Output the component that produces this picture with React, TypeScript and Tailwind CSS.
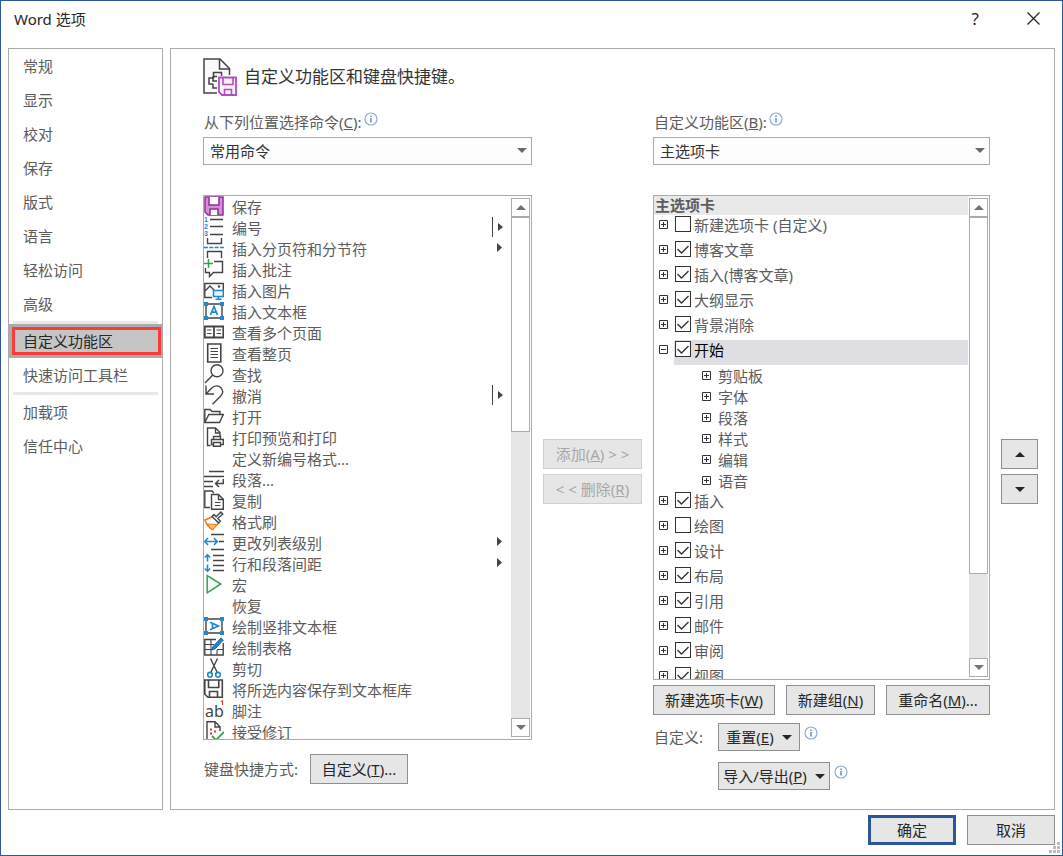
import { useState } from 'react'
import type { ReactNode } from 'react'

const INK = '#444444'
const BLUE = '#1e88cf'
const GREEN = '#3a9e4f'

const icons: Record<string, ReactNode> = {
  save: (
    <>
      <path d="M1 1H19V19H4L1 16Z" fill="#d58fd8" stroke="#8f2f97" strokeWidth="1.5" />
      <path d="M5 1V9H15V1" fill="#fff" stroke="#8f2f97" strokeWidth="1.5" />
      <path d="M6 19V13H14V19" fill="#fff" stroke="#8f2f97" strokeWidth="1.5" />
    </>
  ),
  numbering: (
    <>
      <g fill={BLUE} stroke="none" fontSize="7" fontWeight="700" fontFamily="Liberation Sans, sans-serif">
        <text x="0" y="5">1</text>
        <text x="0" y="12">2</text>
        <text x="0" y="19">3</text>
      </g>
      <path d="M6 2.5H19M6 9.5H19M6 17.5H19" />
    </>
  ),
  pageBreak: (
    <>
      <path d="M3.5 0V5.5H17.5V0M3.5 20V13.5H17.5V20" />
      <path d="M0 9.5H20" stroke={BLUE} strokeDasharray="4 1.3" />
    </>
  ),
  comment: (
    <>
      <path d="M10 2.5H18.5V13.5H9.5L5.5 17.5V13.5H1.5V9" />
      <path d="M4.5 0V9M0 4.5H9" stroke={GREEN} strokeWidth="1.5" />
    </>
  ),
  picture: (
    <>
      <path d="M8 17.5H.8V3.5H19.3V10M1 11L6 6L10 10" />
      <circle cx="15" cy="6.5" r="1.2" fill={INK} stroke="none" />
      <path d="M9.5 10.5H19.3V16.5H9.5ZM14.5 16.5V19M11.5 19.2H17.5" fill="#eaf4fb" stroke={BLUE} strokeWidth="1.5" />
    </>
  ),
  textBox: (
    <>
      <path d="M2 3H18V17H2Z" />
      <path d="M0 1H4V5H0ZM16 1H20V5H16ZM0 15H4V19H0ZM16 15H20V19H16Z" fill={BLUE} stroke="none" />
      <path d="M6.5 14L10 5.5L13.5 14M7.8 11.2H12.2" stroke={BLUE} strokeWidth="1.7" />
    </>
  ),
  multiPage: (
    <>
      <path d="M.8 4.5H19.3V15.5H.8ZM10 4.5V15.5" strokeWidth="1.8" />
      <path d="M3 8H7.5M3 11.5H7.5M12.5 8H17M12.5 11.5H17" strokeWidth="1.1" />
    </>
  ),
  onePage: (
    <>
      <path d="M3.7 1H16.8V19H3.7Z" strokeWidth="1.6" />
      <path d="M6.5 5.5H14M6.5 8.5H14M6.5 11.5H14M6.5 14.5H14" strokeWidth="1.1" />
    </>
  ),
  find: (
    <>
      <circle cx="13" cy="6.8" r="6" />
      <path d="M8.8 11L1 19" />
    </>
  ),
  undo: <path d="M2 .5V9H10M2 9L7.5 3.2C10.5 .2 14.5 .2 16.9 2.8C19.3 5.4 19 8.8 16.5 11.3L8.5 19.3" />,
  open: <path d="M.8 16.5V3.5H6L8 5.5H16V8.5M.8 16.5L4.8 8.5H19.3L15.5 16.5Z" />,
  print: (
    <>
      <path d="M6.5 18.5H3.5V1H11.5L16 5.5V9M11.5 1V6H16" />
      <path d="M9.5 12.5V9.5H16.5V12.5M9.5 17.5H7.5V12.5H19.3V17.5H16.5M9.5 15.5H16.5V19.3H9.5Z" />
    </>
  ),
  paragraph: (
    <>
      <path d="M5 2.5H20M0 7.5H20M0 12.5H9M0 17.5H9" />
      <path d="M19.3 10V14.5H11.5M15 11L11.5 14.5L15 18" />
    </>
  ),
  copy: (
    <>
      <path d="M6 17.5H.8V1H8L10 3" />
      <path d="M7.5 4.5H14.5L19.3 9.3V19.2H7.5ZM14.5 4.5V9.5H19.3" />
      <path d="M11 12.5H16.5M11 15.5H16.5" strokeWidth="1.1" />
    </>
  ),
  brush: (
    <>
      <path d="M9 5.5L1 9C2.5 13.5 5 16.8 8.5 18.5L14.5 12Z" fill="#fff" stroke="#e07b1f" strokeWidth="1.5" />
      <path d="M3.5 13L13 13.5L8.5 18.5C6.5 17.3 4.8 15.3 3.5 13Z" fill="#f6c36a" stroke="#e07b1f" strokeWidth="1" />
      <path d="M8 5.5L14.8 12L16.3 10L13.8 7.5L18.8 3L16.8 1L12.2 5.8L10 3.5Z" fill="#fff" />
    </>
  ),
  listLevel: (
    <>
      <path d="M7 2.5H20M15 9.5H20M7 17.5H20" />
      <path d="M1 9.5H13M4 6L.8 9.5L4 13M10 6L13.2 9.5L10 13" stroke={BLUE} strokeWidth="1.6" />
    </>
  ),
  spacing: (
    <>
      <path d="M9 2.5H20M9 7.5H20M9 12.5H20M9 17.5H20" />
      <path d="M3.5 2V8.5M.8 4.5L3.5 1.8L6.2 4.5M3.5 11.5V18M.8 15.5L3.5 18.2L6.2 15.5" stroke={BLUE} strokeWidth="1.6" />
    </>
  ),
  macro: <path d="M3.2 1.5V18.8L16.8 10Z" fill="#f3faf4" stroke={GREEN} strokeWidth="1.5" />,
  verticalText: (
    <>
      <path d="M2 3H18V17H2Z" />
      <path d="M0 1H4V5H0ZM16 1H20V5H16ZM0 15H4V19H0ZM16 15H20V19H16Z" fill={BLUE} stroke="none" />
      <path d="M6 6.3L14.3 10L6 13.7M8.5 7.7V12.3" stroke={BLUE} strokeWidth="1.7" />
    </>
  ),
  drawTable: (
    <>
      <path d="M12 2.5H.8V18H19.2V6" />
      <path d="M1 7.5H10M1 12.5H8M13 12.5H19M7 2.5V18M13 13V18" strokeWidth="1.1" />
      <path d="M8 13L9 9.5L17 1L19.3 3L11.3 11.7Z" fill={BLUE} stroke="#1763a6" strokeWidth="1" />
    </>
  ),
  cut: (
    <>
      <path d="M6.5 .5L13 14M13.5 .5L7 14" />
      <circle cx="6" cy="16.7" r="2.3" stroke={BLUE} strokeWidth="1.6" />
      <circle cx="14" cy="16.7" r="2.3" stroke={BLUE} strokeWidth="1.6" />
    </>
  ),
  saveGallery: <path d="M.8 1H18.3V18.3H4L.8 15.2ZM4.5 1V8.5H14.8V1M5.5 18.3V12.5H13.5V18.3" strokeWidth="1.6" />,
  footnote: (
    <>
      <text x="1" y="17" fill={INK} stroke="none" fontSize="16" fontFamily="Noto Sans, sans-serif">ab</text>
      <path d="M17 1.5L18.5 .8V5" stroke="#e0393e" strokeWidth="1.2" />
    </>
  ),
  accept: (
    <>
      <path d="M9 19H3V.8H11L16 5.8V10M11 .8V6H16" />
      <path d="M6 8.5H8M6 12.5H8M10 10.5H12" stroke="#e0393e" strokeWidth="2" />
      <path d="M8 15L12 19L20 11" stroke={GREEN} strokeWidth="1.8" />
    </>
  ),
}

type Command = { label: string; icon?: string; menu?: 'arrow' | 'split' }

const commands: Command[] = [
  { label: '保存', icon: 'save' },
  { label: '编号', icon: 'numbering', menu: 'split' },
  { label: '插入分页符和分节符', icon: 'pageBreak', menu: 'arrow' },
  { label: '插入批注', icon: 'comment' },
  { label: '插入图片', icon: 'picture' },
  { label: '插入文本框', icon: 'textBox' },
  { label: '查看多个页面', icon: 'multiPage' },
  { label: '查看整页', icon: 'onePage' },
  { label: '查找', icon: 'find' },
  { label: '撤消', icon: 'undo', menu: 'split' },
  { label: '打开', icon: 'open' },
  { label: '打印预览和打印', icon: 'print' },
  { label: '定义新编号格式...' },
  { label: '段落...', icon: 'paragraph' },
  { label: '复制', icon: 'copy' },
  { label: '格式刷', icon: 'brush' },
  { label: '更改列表级别', icon: 'listLevel', menu: 'arrow' },
  { label: '行和段落间距', icon: 'spacing', menu: 'arrow' },
  { label: '宏', icon: 'macro' },
  { label: '恢复' },
  { label: '绘制竖排文本框', icon: 'verticalText' },
  { label: '绘制表格', icon: 'drawTable' },
  { label: '剪切', icon: 'cut' },
  { label: '将所选内容保存到文本框库', icon: 'saveGallery' },
  { label: '脚注', icon: 'footnote' },
  { label: '接受修订', icon: 'accept' },
]

type Tab = { label: string; checked: boolean; groups?: string[] }

const tabs: Tab[] = [
  { label: '新建选项卡 (自定义)', checked: false },
  { label: '博客文章', checked: true },
  { label: '插入(博客文章)', checked: true },
  { label: '大纲显示', checked: true },
  { label: '背景消除', checked: true },
  { label: '开始', checked: true, groups: ['剪贴板', '字体', '段落', '样式', '编辑', '语音'] },
  { label: '插入', checked: true },
  { label: '绘图', checked: false },
  { label: '设计', checked: true },
  { label: '布局', checked: true },
  { label: '引用', checked: true },
  { label: '邮件', checked: true },
  { label: '审阅', checked: true },
  { label: '视图', checked: true },
]

const navGroups = [
  ['常规', '显示', '校对', '保存', '版式', '语言', '轻松访问', '高级'],
  ['自定义功能区', '快速访问工具栏'],
  ['加载项', '信任中心'],
]

function Triangle({ up = false, className = '' }: { up?: boolean; className?: string }) {
  return (
    <svg width="10" height="5" viewBox="0 0 10 5" fill="currentColor" className={`shrink-0 ${className}`} aria-hidden="true">
      <path d={up ? 'M0 5L5 0L10 5Z' : 'M0 0L5 5L10 0Z'} />
    </svg>
  )
}

function Info() {
  return (
    <svg width="14" height="14" viewBox="0 0 14 14" fill="none" className="shrink-0" aria-hidden="true">
      <circle cx="7" cy="7" r="6" stroke="#8fabd6" strokeWidth="1.2" />
      <path d="M7 6V10.5M7 3.5V5" stroke="#3f6cb0" strokeWidth="1.2" />
    </svg>
  )
}

function Btn({ className, children, ...rest }: React.ButtonHTMLAttributes<HTMLButtonElement>) {
  return (
    <button
      type="button"
      className={`flex shrink-0 items-center justify-center whitespace-nowrap bg-[#e6e6e6] ${className}`}
      {...rest}
    >
      {children}
    </button>
  )
}

function Picker({ id, value }: { id: string; value: string }) {
  return (
    <div className="relative text-[#333]">
      <select id={id} className="block h-7 w-full appearance-none rounded-none border border-[#ababab] bg-[#fdfdfd] px-[6px] outline-none">
        <option>{value}</option>
      </select>
      <Triangle className="pointer-events-none absolute right-[5px] top-[11px] text-[#6b6b6b]" />
    </div>
  )
}

function ScrollBar({ thumb }: { thumb: string }) {
  return (
    <div className="mb-[2px] mr-px mt-[2px] flex w-[19px] shrink-0 flex-col bg-[#e6e6e6] text-[#737373]">
      <button type="button" aria-label="向上滚动" className="flex h-[19px] shrink-0 items-center justify-center border border-[#ababab] bg-white">
        <Triangle up />
      </button>
      <div className="min-h-0 flex-1">
        <div className={`border border-[#ababab] bg-white ${thumb}`} />
      </div>
      <button type="button" aria-label="向下滚动" className="flex h-[19px] shrink-0 items-center justify-center border border-[#ababab] bg-white">
        <Triangle />
      </button>
    </div>
  )
}

function Expander({ label, open = false }: { label: string; open?: boolean }) {
  return (
    <button type="button" aria-label={label} aria-expanded={open} className="size-[9px] shrink-0">
      <svg width="9" height="9" viewBox="0 0 9 9" fill="none" stroke="#333" className="block">
        <path d={open ? 'M.5 .5H8.5V8.5H.5ZM2 4.5H7' : 'M.5 .5H8.5V8.5H.5ZM2 4.5H7M4.5 2V7'} />
      </svg>
    </button>
  )
}

function TabRow({ tab }: { tab: Tab }) {
  const [checked, setChecked] = useState(tab.checked)
  const open = !!tab.groups
  return (
    <li>
      <div className="flex h-[25px] pl-[5px]">
        <div className="flex items-center pb-[6px]">
          <Expander label={tab.label} open={open} />
        </div>
        <label className={`ml-[6px] flex flex-1 items-start pl-px pt-px ${open ? 'bg-[#dfdee3] text-black' : ''}`}>
          <span className="grid size-4 shrink-0">
            <input
              type="checkbox"
              checked={checked}
              onChange={(e) => setChecked(e.target.checked)}
              className="peer col-start-1 row-start-1 size-4 appearance-none border border-[#333] bg-white"
            />
            <svg viewBox="0 0 16 16" fill="none" stroke="#333" strokeWidth="1.4" className="pointer-events-none invisible col-start-1 row-start-1 peer-checked:visible">
              <path d="M2.5 8L6.5 12L13.5 5" />
            </svg>
          </span>
          <span className="ml-[3px] whitespace-nowrap leading-[18px]">{tab.label}</span>
        </label>
      </div>
      {tab.groups && (
        <ul>
          {tab.groups.map((g) => (
            <li key={g} className="flex h-[21px] items-center gap-[7px] pl-12">
              <Expander label={g} />
              <span>{g}</span>
            </li>
          ))}
        </ul>
      )}
    </li>
  )
}

function NavItem({ label }: { label: string }) {
  if (label === '自定义功能区') {
    return (
      <button type="button" aria-current="page" className="-mx-px flex h-[34px] bg-[#ababab] py-[3px] pl-1 pr-[2px] text-left text-[#262626]">
        <span className="flex flex-1 items-center border-3 border-[#fc3a3a] bg-[#c5c5c5] pl-2">{label}</span>
      </button>
    )
  }
  return (
    <button type="button" className="h-[34px] pl-[14px] text-left">
      {label}
    </button>
  )
}

export default function App() {
  return (
    <div className="relative flex h-screen min-h-[640px] flex-col border border-[#2b579a] bg-white px-[7px] font-['Noto_Sans','Noto_Sans_CJK_SC',sans-serif] text-[15px] leading-5 text-[#5c5c5c]">
      <header className="flex h-[47px] shrink-0 justify-between pb-3 pl-[6px] pr-[15px] text-[#262626]">
        <h1 className="self-center">Word 选项</h1>
        <div className="flex items-center gap-12">
          <button type="button" className="text-[17px]">?</button>
          <button type="button" aria-label="关闭">
            <svg width="13" height="13" viewBox="0 0 13 13" stroke="#262626" strokeWidth="1.3" fill="none" className="block">
              <path d="M.5 .5L12.5 12.5M12.5 .5L.5 12.5" />
            </svg>
          </button>
        </div>
      </header>

      <div className="flex min-h-0 flex-1 gap-[7px]">
        <nav className="flex w-[155px] shrink-0 flex-col border border-[#ababab]">
          {navGroups.map((group, i) => (
            <div key={i} className="flex flex-col">
              {i > 0 && <hr className="mx-1 h-[3px] border-0 bg-[#e8e8e8]" />}
              {group.map((label) => (
                <NavItem key={label} label={label} />
              ))}
            </div>
          ))}
        </nav>

        <main className="flex min-w-0 flex-1 flex-col border border-[#ababab] pl-8 pr-4 pt-[9px]">
          <div className="flex h-[38px] shrink-0 items-center gap-[6px]">
            <svg width="35" height="38" viewBox="0 0 35 38" fill="none" stroke={INK} strokeWidth="1.5" aria-hidden="true">
              <path d="M14 35H1V1H17L26.5 10.5V17" fill="#fafafa" />
              <path d="M16.5 1V11H26.5" />
              <path d="M10.5 18V14.5H18.5V18M14 18.5H10.5V20H6V26H10M10 18V23H14M10 26V30H14" />
              <path d="M16 19.5H33V37H19L16 34Z" fill="#fbf2fb" stroke="#b04fbb" strokeWidth="1.8" />
              <path d="M20 19.5V26.5H30V19.5M21.5 37V31.5H28.5V37" stroke="#b04fbb" strokeWidth="1.6" />
            </svg>
            <h2 className="pb-px text-[17px] text-[#333]">自定义功能区和键盘快捷键。</h2>
          </div>

          <div className="mt-3 flex min-h-0 flex-1 gap-[11px]">
            <section className="flex min-w-0 grow basis-[329px] flex-col pb-[25px]">
              <div className="flex h-[29px] shrink-0 gap-[2px] pl-px pt-1">
                <label htmlFor="commands">从下列位置选择命令(<u>C</u>):</label>
                <Info />
              </div>
              <Picker id="commands" value="常用命令" />
              <div className="mt-[30px] flex min-h-0 flex-1 border border-[#ababab]">
                <ul className="min-w-0 flex-1 overflow-hidden">
                  {commands.map((c) => (
                    <li key={c.label} className="flex h-[21px] items-start">
                      <svg width="20" height="20" viewBox="0 0 20 20" fill="none" stroke={INK} strokeWidth="1.4" className="shrink-0" aria-hidden="true">
                        {c.icon && icons[c.icon]}
                      </svg>
                      <span className="ml-2 flex-1 self-center whitespace-nowrap">{c.label}</span>
                      {c.menu && (
                        <svg width="12" height="20" viewBox="0 0 12 20" fill={INK} className="mr-[7px] shrink-0" aria-hidden="true">
                          {c.menu === 'split' && <path d="M0 0H1V20H0Z" />}
                          <path d={c.menu === 'split' ? 'M6 6L11 10L6 14Z' : 'M5 5L10 9.5L5 14Z'} />
                        </svg>
                      )}
                    </li>
                  ))}
                </ul>
                <ScrollBar thumb="h-[43%]" />
              </div>
              <div className="mt-[14px] flex shrink-0 items-center gap-3 pl-px">
                <span>键盘快捷方式:</span>
                <Btn className="h-[30px] w-[98px] border border-[#8f8f8f] text-[#262626]">
                  自定义(<u>T</u>)...
                </Btn>
              </div>
            </section>

            <div className="flex w-[99px] shrink-0 flex-col justify-center gap-[5px] pt-[26px] text-[#a6a6a6]">
              <Btn disabled className="h-[30px] border border-[#cfcfcf]">
                添加(<u>A</u>)&nbsp;&gt;&nbsp;&gt;
              </Btn>
              <Btn disabled className="h-[30px] border border-[#cfcfcf]">
                &lt;&nbsp;&lt;&nbsp;删除(<u>R</u>)
              </Btn>
            </div>

            <section className="flex min-w-0 grow basis-[337px] flex-col pb-[19px]">
              <div className="flex h-[29px] shrink-0 gap-[2px] pl-px pt-1">
                <label htmlFor="ribbon">自定义功能区(<u>B</u>):</label>
                <Info />
              </div>
              <Picker id="ribbon" value="主选项卡" />
              <div className="mt-[30px] flex min-h-0 flex-1 border border-[#ababab]">
                <div className="mr-px min-w-0 flex-1 overflow-hidden">
                  <h3 className="h-[19px] bg-[#e9e9e9] pl-px font-bold leading-[19px]">主选项卡</h3>
                  <ul>
                    {tabs.map((t) => (
                      <TabRow key={t.label} tab={t} />
                    ))}
                  </ul>
                </div>
                <ScrollBar thumb="h-[81%]" />
              </div>
              <div className="mt-[5px] flex shrink-0 justify-between text-[#262626]">
                <Btn className="h-[30px] w-[122px] border border-[#8f8f8f]">新建选项卡(<u>W</u>)</Btn>
                <Btn className="h-[30px] w-[89px] border border-[#8f8f8f]">新建组(<u>N</u>)</Btn>
                <Btn className="h-[30px] w-[104px] border border-[#8f8f8f]">重命名(<u>M</u>)...</Btn>
              </div>
              <div className="mt-2 grid shrink-0 grid-cols-[64px_1fr] gap-y-[11px] pl-px">
                <span className="self-center">自定义:</span>
                <div className="flex gap-1">
                  <Btn className="h-7 w-[82px] gap-2 border border-[#8f8f8f] text-[#262626]">
                    <span>重置(<u>E</u>)</span>
                    <Triangle />
                  </Btn>
                  <div className="pt-[3px]"><Info /></div>
                </div>
                <div className="col-start-2 flex gap-1">
                  <Btn className="h-7 w-[112px] gap-2 border border-[#8f8f8f] text-[#262626]">
                    <span>导入/导出(<u>P</u>)</span>
                    <Triangle />
                  </Btn>
                  <div className="pt-[3px]"><Info /></div>
                </div>
              </div>
            </section>

            <div className="flex w-[37px] shrink-0 flex-col justify-center gap-[5px] pt-[26px] text-[#262626]">
              <Btn aria-label="上移" className="h-[30px] border border-[#8f8f8f]"><Triangle up /></Btn>
              <Btn aria-label="下移" className="h-[30px] border border-[#8f8f8f]"><Triangle /></Btn>
            </div>
          </div>
        </main>
      </div>

      <footer className="flex shrink-0 justify-end gap-[11px] pb-[10px] pt-[5px] text-[#262626]">
        <Btn className="h-[30px] w-[88px] border-3 border-[#2b579a]">确定</Btn>
        <Btn className="h-[30px] w-[88px] border border-[#8f8f8f]">取消</Btn>
      </footer>

      <svg width="11" height="11" viewBox="0 0 11 11" fill="#bdbdbd" className="absolute bottom-[2px] right-[2px]" aria-hidden="true">
        <path d="M8 0H11V3H8ZM4 4H7V7H4ZM8 4H11V7H8ZM0 8H3V11H0ZM4 8H7V11H4ZM8 8H11V11H8Z" />
      </svg>
    </div>
  )
}
